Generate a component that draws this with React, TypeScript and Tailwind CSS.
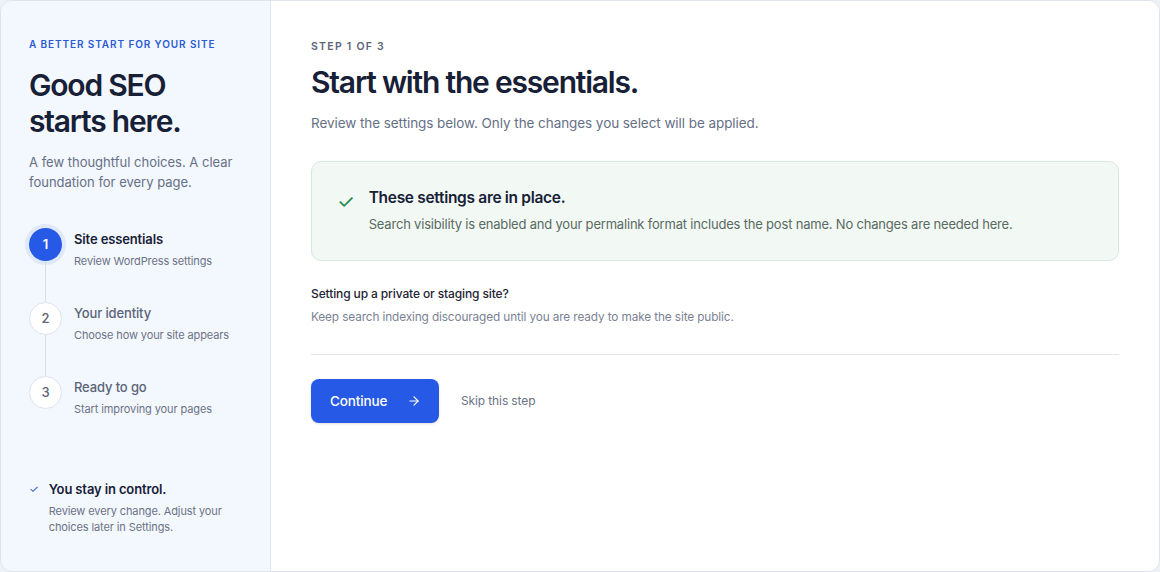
import { ArrowRight } from "lucide-react";

const steps = [
  { n: 1, title: "Site essentials", sub: "Review WordPress settings", active: true },
  { n: 2, title: "Your identity", sub: "Choose how your site appears", active: false },
  { n: 3, title: "Ready to go", sub: "Start improving your pages", active: false },
];

const Sidebar = () => {
  return (
    <aside className="flex w-[270px] shrink-0 flex-col border-r border-[#dfe5f0] bg-[#f3f7fe] pl-[28px] pr-6 pt-[36px] pb-[36px]">
      <p className="text-[10px] font-semibold uppercase tracking-[0.09em] text-[#2a5bd7]">
        A better start for your site
      </p>
      <h1 className="mt-[15px] text-[30px] font-semibold leading-[36px] tracking-[-0.04em] text-[#172036]">
        Good SEO
        <br />
        starts here.
      </h1>
      <p className="mt-[13px] text-[13px] leading-[20px] text-[#667085]">
        A few thoughtful choices. A clear foundation for every page.
      </p>

      <ol className="mt-[36px] flex flex-col">
        {steps.map((s, i) => (
          <li key={s.n} className="flex gap-[12px]">
            <div className="flex w-[33px] flex-col items-center">
              {s.active ? (
                <div className="flex h-[33px] w-[33px] items-center justify-center rounded-full bg-[#2559e6] text-[13px] font-semibold text-white ring-4 ring-[#e0e9fc]">
                  {s.n}
                </div>
              ) : (
                <div className="flex h-[33px] w-[33px] items-center justify-center rounded-full border border-[#dde3ee] bg-white text-[13px] font-medium text-[#5b6477]">
                  {s.n}
                </div>
              )}
              {i < steps.length - 1 && <div className="h-[41px] w-px bg-[#d6dce8]" />}
            </div>
            <div className="pt-[1px]">
              <p
                className={
                  s.active
                    ? "text-[13px] font-semibold leading-[20px] tracking-[-0.01em] text-[#172036]"
                    : "text-[13px] font-medium leading-[20px] tracking-[-0.01em] text-[#5b6477]"
                }
              >
                {s.title}
              </p>
              <p className="mt-[4px] text-[11px] leading-[16px] tracking-[-0.01em] text-[#6b7385]">
                {s.sub}
              </p>
            </div>
          </li>
        ))}
      </ol>

      <div className="mt-auto flex gap-[10px]">
        <span className="pt-[2px] text-[11px] text-[#2a5bd7]">✓</span>
        <div>
          <p className="text-[13px] font-semibold leading-[20px] tracking-[-0.01em] text-[#172036]">
            You stay in control.
          </p>
          <p className="mt-[4px] text-[11px] leading-[16px] tracking-[-0.01em] text-[#6b7385]">
            Review every change. Adjust your choices later in Settings.
          </p>
        </div>
      </div>
    </aside>
  );
};

const Main = () => {
  return (
    <main className="flex-1 bg-white pl-[40px] pr-[40px] pt-[38px]">
      <p className="text-[10.5px] font-semibold uppercase tracking-[0.12em] text-[#5b6477]">Step 1 of 3</p>
      <h2 className="mt-[8px] text-[30px] font-semibold leading-[38px] tracking-[-0.04em] text-[#172036]">
        Start with the essentials.
      </h2>
      <p className="mt-[11px] text-[13.5px] leading-[22px] tracking-[-0.005em] text-[#667085]">
        Review the settings below. Only the changes you select will be applied.
      </p>

      <div className="mt-[27px] flex h-[100px] gap-[14px] rounded-[10px] border border-[#d4eadc] bg-[#f2f9f5] pl-[25px] pt-[24px]">
        <span className="pt-[2px] text-[20px] leading-[28px] text-[#1e8a4b]">✓</span>
        <div>
          <p className="text-[15.5px] font-semibold leading-[24px] tracking-[-0.02em] text-[#172036]">
            These settings are in place.
          </p>
          <p className="mt-[4px] text-[13px] leading-[20px] tracking-[-0.015em] text-[#5a6a62]">
            Search visibility is enabled and your permalink format includes the post name. No changes are needed here.
          </p>
        </div>
      </div>

      <div className="mt-[24px] border-b border-[#e3e6ec] pb-[28px]">
        <p className="text-[12px] font-medium leading-[18px] tracking-[-0.01em] text-[#1d2433]">
          Setting up a private or staging site?
        </p>
        <p className="mt-[5px] text-[11.8px] leading-[18px] tracking-[-0.01em] text-[#7a8294]">
          Keep search indexing discouraged until you are ready to make the site public.
        </p>
      </div>

      <div className="mt-[24px] flex items-center gap-[22px]">
        <button className="flex h-[44px] w-[128px] items-center gap-[20px] rounded-lg bg-[#2559e6] pl-[19px] text-[13.5px] font-medium tracking-[-0.01em] text-white shadow-sm">
          Continue
          <ArrowRight size={14} strokeWidth={2} />
        </button>
        <span className="text-[12px] tracking-[-0.01em] text-[#6b7385]">Skip this step</span>
      </div>
    </main>
  );
};

export default function App() {
  return (
    <div className="h-[572px] w-[1160px] bg-[#eef1f5] font-['Inter',sans-serif]">
      <div className="flex h-full overflow-hidden rounded-[12px] border border-[#dfe4ec]">
        <Sidebar />
        <Main />
      </div>
    </div>
  );
}
